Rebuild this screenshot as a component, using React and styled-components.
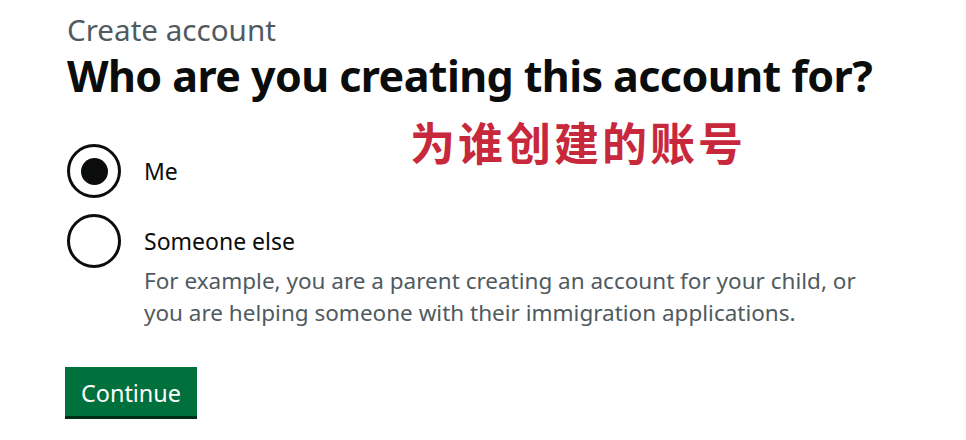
import React, { useState } from "react";
import styled, { createGlobalStyle } from "styled-components";

const Global = createGlobalStyle`
  html, body { margin: 0; padding: 0; background: #ffffff; }
  body { font-family: "Noto Sans", "Liberation Sans", sans-serif; color: #0b0c0c; }
`;

const Page = styled.main`
  position: relative;
  width: 966px;
  height: 440px;
  box-sizing: border-box;
  padding: 10px 0 0 67px;
  overflow: hidden;
`;

const Column = styled.div`
  display: flex;
  flex-direction: column;
`;

const Caption = styled.span`
  display: block;
  font-size: 29.6px;
  line-height: 40px;
  color: #505a5f;
`;

const Heading = styled.h1`
  margin: 0 0 42px;
  font-size: 43px;
  line-height: 52px;
  font-weight: 700;
  letter-spacing: -0.58px;
  color: #0b0c0c;
`;

const Fieldset = styled.fieldset`
  margin: 0;
  padding: 0;
  border: 0;
  display: flex;
  flex-direction: column;
  gap: 16px;
`;

const Item = styled.label`
  display: grid;
  grid-template-columns: 54px 1fr;
  column-gap: 23px;
  align-items: start;
  cursor: pointer;
`;

const Circle = styled.span`
  width: 54px;
  height: 54px;
  box-sizing: border-box;
  border: 3px solid #0b0c0c;
  border-radius: 50%;
  display: flex;
  align-items: center;
  justify-content: center;
  &::after {
    content: "";
    width: 27px;
    height: 27px;
    border-radius: 50%;
    background: #0b0c0c;
    opacity: ${(p) => (p.$checked ? 1 : 0)};
  }
`;

const LabelText = styled.span`
  display: block;
  font-size: 23px;
  line-height: 32px;
  padding-top: 11px;
  color: #0b0c0c;
`;

const Hint = styled.span`
  display: block;
  margin-top: 8px;
  font-size: 22.5px;
  line-height: 32px;
  color: #505a5f;
`;

const Button = styled.button`
  margin-top: 38px;
  margin-left: -2px;
  align-self: flex-start;
  font-family: inherit;
  font-size: 23.4px;
  line-height: 28px;
  color: #ffffff;
  background: #00703c;
  border: 0;
  border-radius: 0;
  box-shadow: 0 3px 0 #002d18;
  padding: 12px 16px 9px;
  cursor: pointer;
`;

const Note = styled.div`
  position: absolute;
  left: 410px;
  top: 110px;
  font-family: "Noto Sans CJK SC", sans-serif;
  font-size: 45px;
  font-weight: 700;
  letter-spacing: 3px;
  color: #c8283c;
  line-height: 64px;
`;

export default function App() {
  const [choice, setChoice] = useState("me");
  return (
    <>
      <Global />
      <Page>
        <Column>
          <Caption>Create account</Caption>
          <Heading>Who are you creating this account for?</Heading>
          <Fieldset>
            <Item onClick={() => setChoice("me")}>
              <Circle $checked={choice === "me"} />
              <LabelText>Me</LabelText>
            </Item>
            <Item onClick={() => setChoice("else")}>
              <Circle $checked={choice === "else"} />
              <div>
                <LabelText>Someone else</LabelText>
                <Hint>
                  For example, you are a parent creating an account for your child, or
                  <br />
                  you are helping someone with their immigration applications.
                </Hint>
              </div>
            </Item>
          </Fieldset>
          <Button>Continue</Button>
        </Column>
        <Note>为谁创建的账号</Note>
      </Page>
    </>
  );
}
